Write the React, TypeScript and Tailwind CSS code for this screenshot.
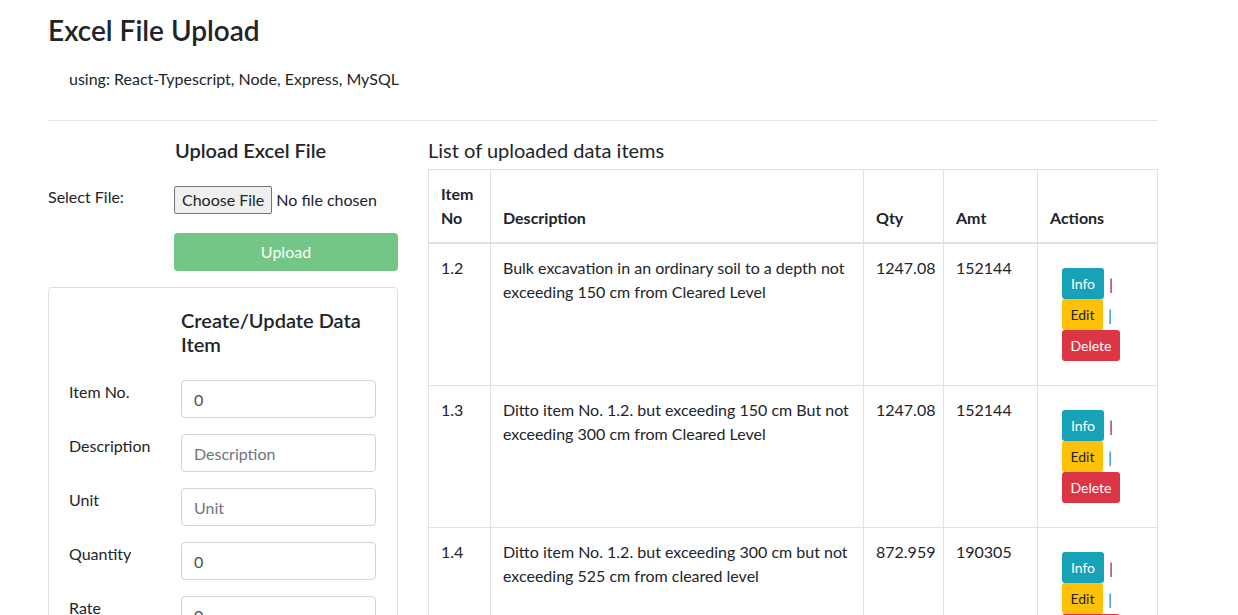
const rows = [
  {
    no: "1.2",
    desc: "Bulk excavation in an ordinary soil to a depth not exceeding 150 cm from Cleared Level",
    qty: "1247.08",
    amt: "152144",
  },
  {
    no: "1.3",
    desc: "Ditto item No. 1.2. but exceeding 150 cm But not exceeding 300 cm from Cleared Level",
    qty: "1247.08",
    amt: "152144",
  },
  {
    no: "1.4",
    desc: "Ditto item No. 1.2. but exceeding 300 cm but not exceeding 525 cm from cleared level",
    qty: "872.959",
    amt: "190305",
  },
]

const fields = [
  { label: "Item No.", value: "0", placeholder: "" },
  { label: "Description", value: "", placeholder: "Description" },
  { label: "Unit", value: "", placeholder: "Unit" },
  { label: "Quantity", value: "0", placeholder: "" },
  { label: "Rate", value: "0", placeholder: "" },
]

function Actions() {
  return (
    <div className="flex flex-col items-start py-[12px] pl-[12px] text-[14px] leading-[21px]">
      <div className="flex items-center h-[31px]">
        <button className="h-[31px] w-[42px] rounded-[3px] bg-[#17a2b8] text-white">Info</button>
        <span className="ml-[5px] text-[16px] text-[#4b2a6e]">|</span>
      </div>
      <div className="flex items-center h-[31px]">
        <button className="h-[31px] w-[41px] rounded-[3px] bg-[#ffc107] text-[#212529]">Edit</button>
        <span className="ml-[5px] text-[16px] text-[#2f6fb4]">|</span>
      </div>
      <button className="h-[31px] w-[58px] rounded-[3px] bg-[#dc3545] text-white">Delete</button>
    </div>
  )
}

export default function App() {
  return (
    <div className="h-[615px] overflow-hidden bg-white text-[#212529] text-[16px] leading-6 font-['Lato',sans-serif]">
      <div className="ml-[48px] w-[1110px] pt-[13px]">
        <h3 className="text-[28px] leading-[34px] font-semibold">Excel File Upload</h3>
        <p className="ml-[21px] mt-[20px]">using: React-Typescript, Node, Express, MySQL</p>
        <hr className="mt-[29px] mb-[17px] border-0 border-t border-[#e5e5e5]" />

        <div className="flex gap-[30px]">
          {/* left column: upload + form */}
          <div className="w-[350px] shrink-0">
            <h5 className="pl-[127px] text-[20px] leading-6 font-semibold">Upload Excel File</h5>
            <div className="mt-[16px] flex">
              <label className="w-[126px] pt-[7px]">Select File:</label>
              <div className="mt-[8px] flex items-center">
                <span className="h-[28px] px-[7px] flex items-center rounded-[2px] border border-[#767676] bg-[#efefef]">
                  Choose File
                </span>
                <span className="ml-[4px]">No file chosen</span>
              </div>
            </div>
            <div className="mt-[19px] pl-[126px]">
              <button className="h-[38px] w-full rounded-[4px] bg-[#73c686] text-white">Upload</button>
            </div>

            <div className="mt-[16px] rounded-[4px] border border-[#dfdfdf] p-[20px]">
              <h4 className="pl-[112px] w-[310px] text-[20px] leading-6 font-semibold">Create/Update Data Item</h4>
              <div className="mt-[24px] flex flex-col gap-[16px]">
                {fields.map((f) => (
                  <div key={f.label} className="flex">
                    <label className="w-[112px] shrink-0">{f.label}</label>
                    <input
                      readOnly
                      value={f.value}
                      placeholder={f.placeholder}
                      className="h-[38px] w-[195px] rounded-[4px] border border-[#ced4da] px-[12px] text-[#495057] placeholder:text-[#6c757d] outline-none"
                    />
                  </div>
                ))}
              </div>
            </div>
          </div>

          {/* right column: table */}
          <div className="w-[730px] shrink-0">
            <h5 className="text-[20px] leading-6 font-normal mb-[7px]">List of uploaded data items</h5>
            <table className="w-[729px] table-fixed border-collapse border border-[#dee2e6]">
              <colgroup>
                <col className="w-[62px]" />
                <col className="w-[373px]" />
                <col className="w-[80px]" />
                <col className="w-[94px]" />
                <col className="w-[120px]" />
              </colgroup>
              <thead>
                <tr className="border-b-2 border-[#dee2e6]">
                  <th className="p-[12px] text-left align-bottom font-bold border border-[#dee2e6]">Item No</th>
                  <th className="p-[12px] text-left align-bottom font-bold border border-[#dee2e6]">Description</th>
                  <th className="p-[12px] text-left align-bottom font-bold border border-[#dee2e6]">Qty</th>
                  <th className="p-[12px] text-left align-bottom font-bold border border-[#dee2e6]">Amt</th>
                  <th className="p-[12px] text-left align-bottom font-bold border border-[#dee2e6]">Actions</th>
                </tr>
              </thead>
              <tbody>
                {rows.map((r) => (
                  <tr key={r.no}>
                    <td className="p-[12px] align-top border border-[#dee2e6]">{r.no}</td>
                    <td className="p-[12px] align-top border border-[#dee2e6]">{r.desc}</td>
                    <td className="p-[12px] align-top border border-[#dee2e6]">{r.qty}</td>
                    <td className="p-[12px] align-top border border-[#dee2e6]">{r.amt}</td>
                    <td className="p-[12px] align-top border border-[#dee2e6]">
                      <Actions />
                    </td>
                  </tr>
                ))}
              </tbody>
            </table>
          </div>
        </div>
      </div>
    </div>
  )
}
